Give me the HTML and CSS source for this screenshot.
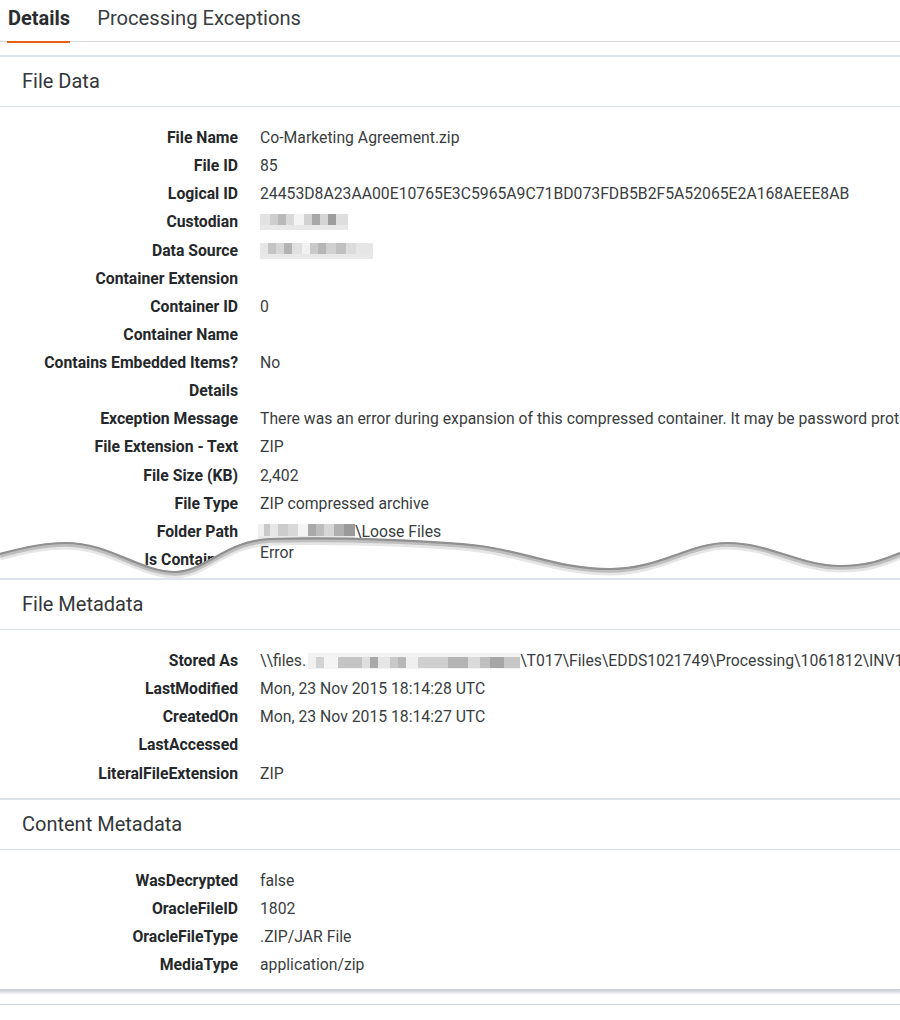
FILE: index.html
```html
<!DOCTYPE html>
<html lang="en">
<head>
<meta charset="utf-8">
<title>Details</title>
<link rel="stylesheet" href="styles.css">
</head>
<body>
<div class="page">
  <nav class="tabs">
    <div class="tab tab--active">Details</div>
    <div class="tab">Processing Exceptions</div>
  </nav>

  <section class="section section--torn">
    <h2 class="section-title">File Data</h2>
    <div class="rows">
      <div class="row"><div class="label">File Name</div><div class="value">Co-Marketing Agreement.zip</div></div>
      <div class="row"><div class="label">File ID</div><div class="value">85</div></div>
      <div class="row"><div class="label">Logical ID</div><div class="value">24453D8A23AA00E10765E3C5965A9C71BD073FDB5B2F5A52065E2A168AEEE8AB</div></div>
      <div class="row"><div class="label">Custodian</div><div class="value"><span class="redact redact--custodian"></span></div></div>
      <div class="row"><div class="label">Data Source</div><div class="value"><span class="redact redact--source"></span></div></div>
      <div class="row"><div class="label">Container Extension</div><div class="value"></div></div>
      <div class="row"><div class="label">Container ID</div><div class="value">0</div></div>
      <div class="row"><div class="label">Container Name</div><div class="value"></div></div>
      <div class="row"><div class="label">Contains Embedded Items?</div><div class="value">No</div></div>
      <div class="row"><div class="label">Details</div><div class="value"></div></div>
      <div class="row"><div class="label">Exception Message</div><div class="value">There was an error during expansion of this compressed container. It may be password protected or corrupt.</div></div>
      <div class="row"><div class="label">File Extension - Text</div><div class="value">ZIP</div></div>
      <div class="row"><div class="label">File Size (KB)</div><div class="value">2,402</div></div>
      <div class="row"><div class="label">File Type</div><div class="value">ZIP compressed archive</div></div>
      <div class="row"><div class="label">Folder Path</div><div class="value"><span class="redact redact--folder"></span>\Loose Files</div></div>
      <div class="row"><div class="label">Is Container?</div><div class="value"></div></div>
    </div>
    <div class="tear" aria-hidden="true">
      <div class="tear-piece">
        <div class="row"><div class="label"></div><div class="value">Error</div></div>
      </div>
      <svg class="tear-edge" width="900" height="42" viewBox="0 0 900 42">
        <path transform="translate(0,3)" fill="none" stroke="#e6e6e6" stroke-width="7" d="M0,18 C25,11 45,7 65,7 C110,7 140,36 175,36 C205,36 225,5 270,3 C340,1 440,5 480,10 C530,17 560,33 610,33 C660,33 690,7 727,7 C770,7 800,30 840,30 C870,30 885,23 900,17"/>
        <path transform="translate(0,1.5)" fill="none" stroke="#bebebe" stroke-width="4.5" d="M0,18 C25,11 45,7 65,7 C110,7 140,36 175,36 C205,36 225,5 270,3 C340,1 440,5 480,10 C530,17 560,33 610,33 C660,33 690,7 727,7 C770,7 800,30 840,30 C870,30 885,23 900,17"/>
        <path fill="none" stroke="#909090" stroke-width="2.2" d="M0,18 C25,11 45,7 65,7 C110,7 140,36 175,36 C205,36 225,5 270,3 C340,1 440,5 480,10 C530,17 560,33 610,33 C660,33 690,7 727,7 C770,7 800,30 840,30 C870,30 885,23 900,17"/>
      </svg>
    </div>
  </section>

  <section class="section">
    <h2 class="section-title">File Metadata</h2>
    <div class="rows">
      <div class="row"><div class="label">Stored As</div><div class="value">\\files.<span class="redact redact--host"></span>\T017\Files\EDDS1021749\Processing\1061812\INV1061812\Co-Marketing Agreement.zip</div></div>
      <div class="row"><div class="label">LastModified</div><div class="value">Mon, 23 Nov 2015 18:14:28 UTC</div></div>
      <div class="row"><div class="label">CreatedOn</div><div class="value">Mon, 23 Nov 2015 18:14:27 UTC</div></div>
      <div class="row"><div class="label">LastAccessed</div><div class="value"></div></div>
      <div class="row"><div class="label">LiteralFileExtension</div><div class="value">ZIP</div></div>
    </div>
  </section>

  <section class="section">
    <h2 class="section-title">Content Metadata</h2>
    <div class="rows">
      <div class="row"><div class="label">WasDecrypted</div><div class="value">false</div></div>
      <div class="row"><div class="label">OracleFileID</div><div class="value">1802</div></div>
      <div class="row"><div class="label">OracleFileType</div><div class="value">.ZIP/JAR File</div></div>
      <div class="row"><div class="label">MediaType</div><div class="value">application/zip</div></div>
    </div>
  </section>

  <div class="page-shadow"></div>
  <div class="page-rule"></div>
</div>
</body>
</html>
```

FILE: styles.css
```css
* { box-sizing: border-box; }

html, body {
  margin: 0;
  padding: 0;
  background: #ffffff;
}

body {
  font-family: Roboto, "Liberation Sans", Arial, sans-serif;
  color: #333638;
  width: 900px;
  overflow: hidden;
}

.page {
  width: 900px;
  overflow: hidden;
}

/* Tabs */
.tabs {
  display: flex;
  align-items: flex-start;
  gap: 26px;
  height: 42px;
  border-bottom: 1px solid #d8dce2;
  padding-left: 7px;
}

.tab {
  height: 43px;
  margin-bottom: -2px;
  padding: 0 0 0 1px;
  font-size: 20.2px;
  line-height: 37px;
  color: #3a3d40;
  border-bottom: 2px solid transparent;
  white-space: nowrap;
}

.tab--active {
  font-size: 20px;
  font-weight: 700;
  color: #2a2d30;
  border-bottom-color: #e8611a;
  padding-right: 0;
}

/* Sections */
.section {
  position: relative;
  border-top: 2px solid #dde3ea;
  padding-bottom: 10px;
}

.tabs + .section {
  margin-top: 13px;
}

.section--torn {
  padding-bottom: 4px;
}

.section-title {
  margin: 0;
  height: 50px;
  padding-left: 22px;
  font-size: 20px;
  font-weight: 400;
  line-height: 49px;
  color: #34373a;
  border-bottom: 1px solid #d6dee8;
}

.rows {
  padding-top: 17px;
}

.row {
  display: grid;
  grid-template-columns: 238px 1fr;
  column-gap: 22px;
  height: 28.125px;
  font-size: 15.75px;
  line-height: 28.125px;
  white-space: nowrap;
}

.label {
  text-align: right;
  font-weight: 700;
  color: #25282b;
}

.value {
  color: #3a3d40;
}

/* Redacted (pixelated) values */
.redact {
  display: inline-block;
  height: 16px;
  vertical-align: -3px;
  background-color: #e8e8e8;
}

.redact--custodian {
  width: 88px;
  background-image:
    linear-gradient(90deg, #e2e2e2 0 10px, #cdcdcd 10px 18px, #b9b9b9 18px 26px, #d9d9d9 26px 34px, #f4f4f4 34px 44px, #d2d2d2 44px 52px, #a8a8a8 52px 60px, #d5d5d5 60px 68px, #9d9d9d 68px 76px, #dedede 76px 88px);
  background-size: 100% 11px;
  background-repeat: no-repeat;
}

.redact--source {
  width: 113px;
  background-image:
    linear-gradient(90deg, #e6e6e6 0 8px, #c4c4c4 8px 16px, #d6d6d6 16px 24px, #b3b3b3 24px 32px, #e0e0e0 32px 42px, #f1f1f1 42px 50px, #c9c9c9 50px 58px, #b6b6b6 58px 66px, #d0d0d0 66px 76px, #c0c0c0 76px 86px, #dcdcdc 86px 96px, #e6e6e6 96px 113px);
  background-size: 100% 11px;
  background-repeat: no-repeat;
}

.redact--folder {
  width: 97px;
  margin-left: -2px;
  background-image:
    linear-gradient(90deg, #f0f0f0 0 6px, #c9c9c9 6px 12px, #e6e6e6 12px 20px, #cccccc 20px 30px, #d8d8d8 30px 40px, #f4f4f4 40px 50px, #a9a9a9 50px 58px, #bdbdbd 58px 66px, #d6d6d6 66px 76px, #b0b0b0 76px 86px, #9a9a9a 86px 97px);
  background-size: 100% 12px;
  background-repeat: no-repeat;
}

.redact--host {
  width: 212px;
  margin-left: 2px;
  background-image:
    linear-gradient(90deg, #f0f0f0 0 8px, #d2d2d2 8px 16px, #f4f4f4 16px 30px, #c4c4c4 30px 54px, #dedede 54px 62px, #a9a9a9 62px 70px, #e6e6e6 70px 82px, #c9c9c9 82px 90px, #b8b8b8 90px 98px, #efefef 98px 110px, #cfcfcf 110px 140px, #b3b3b3 140px 160px, #dadada 160px 172px, #bfbfbf 172px 182px, #a6a6a6 182px 196px, #c7c7c7 196px 212px);
  background-size: 100% 11px;
  background-position: 0 4px;
  background-repeat: no-repeat;
  background-color: #f3f3f3;
}

/* Torn-edge overlay */
.tear {
  position: absolute;
  left: 0;
  bottom: 0;
  width: 900px;
  height: 42px;
  pointer-events: none;
}

.tear-piece {
  height: 42px;
  padding-top: 3px;
  background: #ffffff;
  clip-path: path("M0,18 C25,11 45,7 65,7 C110,7 140,36 175,36 C205,36 225,5 270,3 C340,1 440,5 480,10 C530,17 560,33 610,33 C660,33 690,7 727,7 C770,7 800,30 840,30 C870,30 885,23 900,17 L900,42 L0,42 Z");
}

.tear-edge {
  position: absolute;
  left: 0;
  top: 0;
  overflow: visible;
}

/* Bottom of the panel */
.page-shadow {
  height: 6px;
  background: linear-gradient(#c7cad1, #dfe1e6 50%, #ffffff);
}

.page-rule {
  margin-top: 9px;
  height: 1px;
  background: #cbd6e3;
}
```
